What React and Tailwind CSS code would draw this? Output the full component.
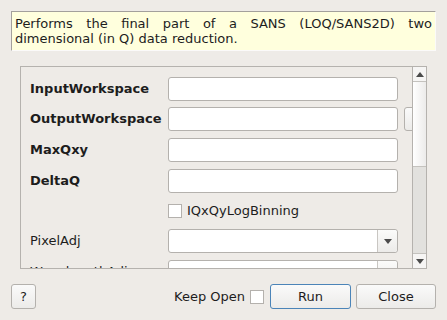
import React from 'react';

const font = { fontFamily: '"DejaVu Sans", "Liberation Sans", sans-serif' };

function TextBox({ className = '' }) {
  return <div className={`h-[24px] w-[230px] shrink-0 rounded-[3px] border border-[#b4b1ad] bg-white ${className}`} />;
}

function Combo() {
  return (
    <div className="flex h-[24px] w-[230px] shrink-0 rounded-[3px] border border-[#b4b1ad] bg-white">
      <div className="flex-1" />
      <div className="flex w-[20px] items-center justify-center rounded-r-[3px] border-l border-[#c9c6c2] bg-gradient-to-b from-[#fbfbfa] to-[#ecebe9]">
        <svg width="8" height="5" viewBox="0 0 8 5"><path d="M0 0h8L4 5z" fill="#4b4b4b" /></svg>
      </div>
    </div>
  );
}

function Row({ label, bold, children, className = '' }) {
  return (
    <div className={`flex h-[24px] items-center ${className}`}>
      <div className={`w-[138px] shrink-0 text-[13px] text-[#1d1d1d] ${bold ? 'font-bold' : ''}`}>{label}</div>
      {children}
    </div>
  );
}

function Button({ children, className = '' }) {
  return (
    <div className={`flex items-center justify-center rounded-[3px] border bg-gradient-to-b from-[#fafafa] to-[#ecebe9] text-[13px] text-[#1d1d1d] ${className}`}>
      {children}
    </div>
  );
}

export default function App() {
  return (
    <div className="h-[320px] w-[447px] overflow-hidden bg-[#eeebe7]" style={font}>
      <div className="ml-[11px] mt-[11px] h-[40px] w-[425px] border-l border-t border-[#a3a09c] border-b-[#fbfaf9] border-r-[#fbfaf9] border-b border-r bg-[#ffffdd] px-[3px] pt-[4px] text-[13px] leading-[15px] text-[#1d1d1d]">
        <div className="text-justify [text-align-last:justify]">Performs the final part of a SANS (LOQ/SANS2D) two</div>
        <div>dimensional (in Q) data reduction.</div>
      </div>

      <div className="ml-[20px] mt-[15px] flex h-[203px] w-[407px] border border-[#b5b2ae]">
        <div className="flex-1 overflow-hidden pl-[9px] pt-[10px]">
          <Row label="InputWorkspace" bold><TextBox /></Row>
          <Row label="OutputWorkspace" bold className="mt-[6px]">
            <TextBox />
            <div className="ml-[6px] h-[24px] w-[30px] shrink-0 rounded-[3px] border border-[#b4b1ad] bg-gradient-to-b from-[#fafafa] to-[#ecebe9]" />
          </Row>
          <Row label="MaxQxy" bold className="mt-[7px]"><TextBox /></Row>
          <Row label="DeltaQ" bold className="mt-[7px]"><TextBox /></Row>
          <div className="mt-[6px] flex h-[24px] items-center pl-[138px]">
            <div className="h-[14px] w-[14px] border border-[#b4b1ad] bg-white" />
            <span className="ml-[5px] text-[13px] text-[#1d1d1d]">IQxQyLogBinning</span>
          </div>
          <Row label="PixelAdj" className="mt-[6px]"><Combo /></Row>
          <Row label="WavelengthAdj" className="mt-[7px]"><Combo /></Row>
        </div>
        <div className="flex w-[14px] shrink-0 flex-col border-l border-[#b5b2ae] bg-[#e2e1de]">
          <div className="flex h-[15px] items-center justify-center border-b border-[#c4c2be] bg-[#f6f5f4]">
            <svg width="8" height="5" viewBox="0 0 8 5"><path d="M0 5h8L4 0z" fill="#4b4b4b" /></svg>
          </div>
          <div className="h-[85px] border-b border-[#c4c2be] bg-gradient-to-r from-[#ffffff] to-[#ecebea]" />
          <div className="flex-1" />
          <div className="flex h-[15px] items-center justify-center border-t border-[#c4c2be] bg-[#f6f5f4]">
            <svg width="8" height="5" viewBox="0 0 8 5"><path d="M0 0h8L4 5z" fill="#4b4b4b" /></svg>
          </div>
        </div>
      </div>

      <div className="mt-[15px] flex h-[25px] items-center px-[11px]">
        <Button className="h-[25px] w-[25px] border-[#b4b1ad]">?</Button>
        <div className="flex-1" />
        <span className="text-[13px] text-[#1d1d1d]">Keep Open</span>
        <div className="ml-[5px] h-[14px] w-[14px] border border-[#b4b1ad] bg-white" />
        <Button className="ml-[6px] h-[25px] w-[81px] border-[#4b84b8]">Run</Button>
        <Button className="ml-[5px] h-[25px] w-[80px] border-[#b4b1ad]">Close</Button>
      </div>
    </div>
  );
}
